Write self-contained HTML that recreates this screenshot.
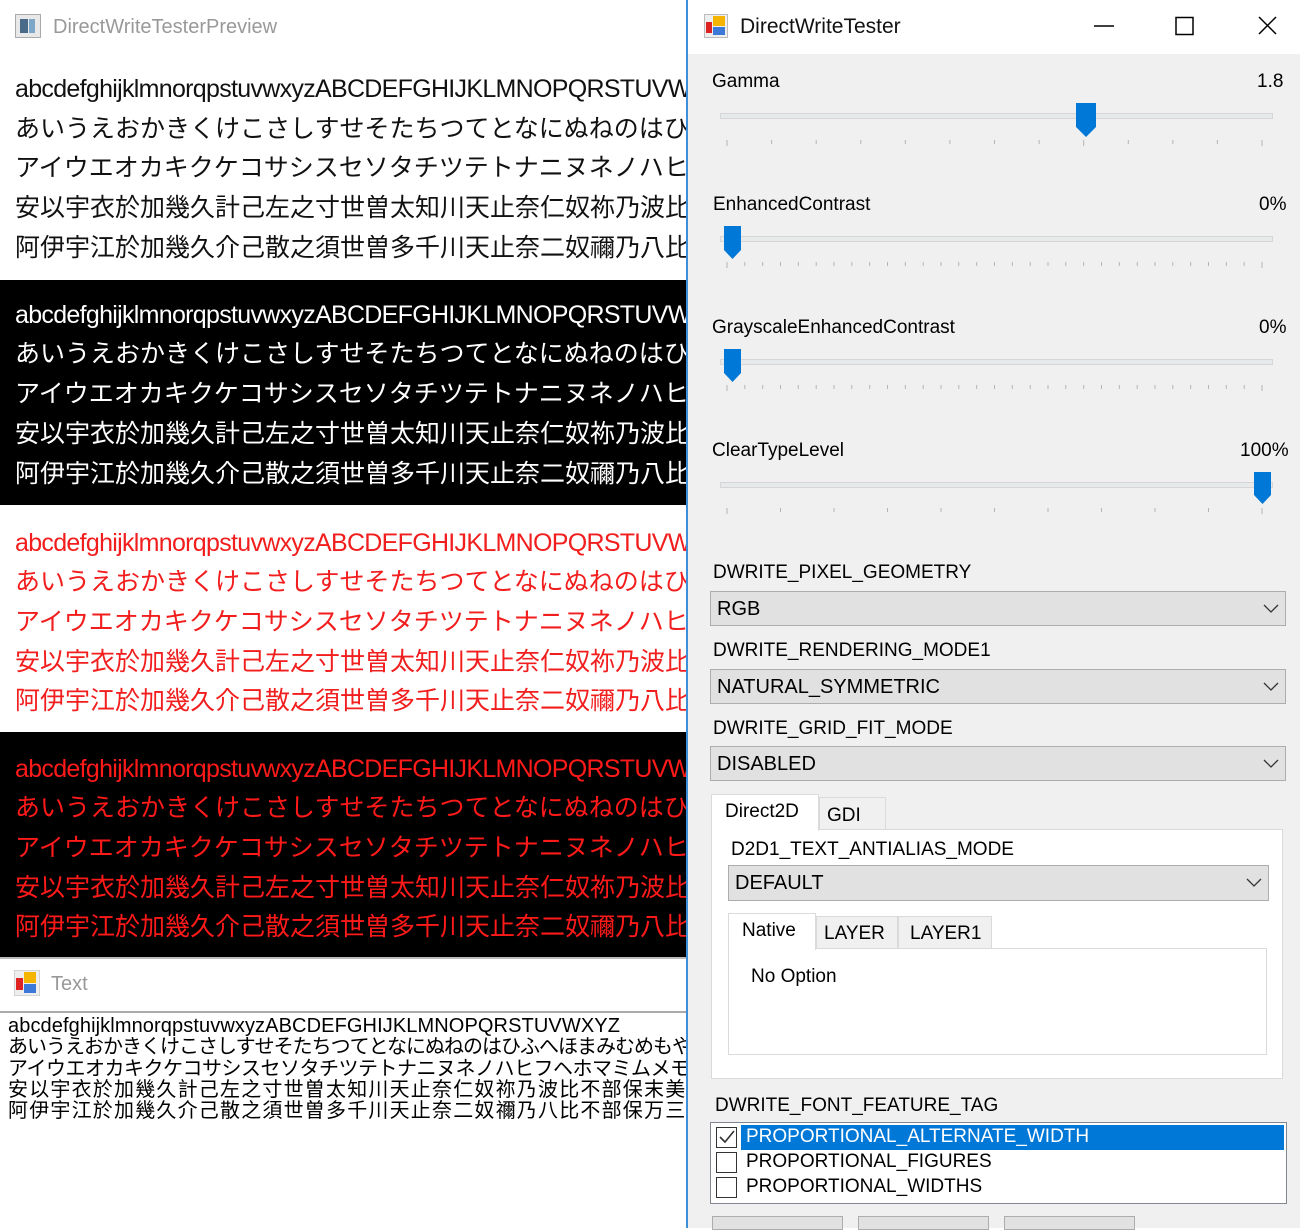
<!DOCTYPE html>
<html><head><meta charset="utf-8">
<style>
*{margin:0;padding:0;box-sizing:border-box}
body{width:1300px;height:1228px;overflow:hidden;background:#fff;position:relative;font-family:"Liberation Sans","Noto Sans CJK JP",sans-serif}
.a{position:absolute;white-space:nowrap}
.pv{position:absolute;left:0;width:686px;overflow:hidden}
.pv div{position:absolute;left:15px;font-size:25px;line-height:30px;white-space:nowrap;font-family:"Liberation Sans","Noto Sans CJK JP",sans-serif;letter-spacing:0px}
.pv div.l{letter-spacing:-0.7px}
.lb{font-size:19px;color:#000}
.combo{position:absolute;background:#e1e1e1;border:1px solid #adadad;font-size:20px;padding-left:6px;line-height:34px}
.combo svg{position:absolute;right:6px;top:12px}
.tk{stroke:#b4b4b4;stroke-width:1}
</style></head><body>

<!-- Left preview window -->
<div class="a" style="left:15px;top:14px;width:26px;height:24px;background:#e8e8e8;border:1px solid #aaa"><div style="position:absolute;left:4px;top:4px;width:8px;height:14px;background:#4a6a8a"></div><div style="position:absolute;left:13px;top:4px;width:6px;height:14px;background:#7da7c9"></div></div>
<div class="a" style="left:53px;top:16px;font-size:20px;color:#999">DirectWriteTesterPreview</div>

<div class="pv" style="top:55px;height:225px;background:#fff;color:#111">
<div class="l" style="top:19px">abcdefghijklmnorqpstuvwxyzABCDEFGHIJKLMNOPQRSTUVWXYZ</div>
<div style="top:59px">あいうえおかきくけこさしすせそたちつてとなにぬねのはひふへほまみむめも</div>
<div style="top:98px">アイウエオカキクケコサシスセソタチツテトナニヌネノハヒフヘホマミムメモ</div>
<div style="top:138px">安以宇衣於加幾久計己左之寸世曽太知川天止奈仁奴祢乃波比不部保末美</div>
<div style="top:178px">阿伊宇江於加幾久介己散之須世曽多千川天止奈二奴禰乃八比不部保万三</div>
</div>
<div class="pv" style="top:280px;height:225px;background:#000;color:#fff">
<div class="l" style="top:20px">abcdefghijklmnorqpstuvwxyzABCDEFGHIJKLMNOPQRSTUVWXYZ</div>
<div style="top:59px">あいうえおかきくけこさしすせそたちつてとなにぬねのはひふへほまみむめも</div>
<div style="top:99px">アイウエオカキクケコサシスセソタチツテトナニヌネノハヒフヘホマミムメモ</div>
<div style="top:139px">安以宇衣於加幾久計己左之寸世曽太知川天止奈仁奴祢乃波比不部保末美</div>
<div style="top:179px">阿伊宇江於加幾久介己散之須世曽多千川天止奈二奴禰乃八比不部保万三</div>
</div>
<div class="pv" style="top:505px;height:227px;background:#fff;color:#f21d1d">
<div class="l" style="top:23px">abcdefghijklmnorqpstuvwxyzABCDEFGHIJKLMNOPQRSTUVWXYZ</div>
<div style="top:62px">あいうえおかきくけこさしすせそたちつてとなにぬねのはひふへほまみむめも</div>
<div style="top:102px">アイウエオカキクケコサシスセソタチツテトナニヌネノハヒフヘホマミムメモ</div>
<div style="top:142px">安以宇衣於加幾久計己左之寸世曽太知川天止奈仁奴祢乃波比不部保末美</div>
<div style="top:181px">阿伊宇江於加幾久介己散之須世曽多千川天止奈二奴禰乃八比不部保万三</div>
</div>
<div class="pv" style="top:732px;height:225px;background:#000;color:#ff1a1a">
<div class="l" style="top:22px">abcdefghijklmnorqpstuvwxyzABCDEFGHIJKLMNOPQRSTUVWXYZ</div>
<div style="top:61px">あいうえおかきくけこさしすせそたちつてとなにぬねのはひふへほまみむめも</div>
<div style="top:101px">アイウエオカキクケコサシスセソタチツテトナニヌネノハヒフヘホマミムメモ</div>
<div style="top:141px">安以宇衣於加幾久計己左之寸世曽太知川天止奈仁奴祢乃波比不部保末美</div>
<div style="top:180px">阿伊宇江於加幾久介己散之須世曽多千川天止奈二奴禰乃八比不部保万三</div>
</div>
<div class="a" style="left:0;top:957px;width:686px;height:2px;background:#bbb"></div>

<!-- Text window -->
<svg class="a" style="left:14px;top:970px" width="26" height="26"><rect x="0" y="0" width="26" height="26" fill="#eee" stroke="#bbb"/><rect x="2" y="8" width="7" height="12" fill="#d22"/><rect x="10" y="2" width="12" height="11" fill="#f4b400"/><rect x="10" y="14" width="12" height="9" fill="#3b78d8"/></svg>
<div class="a" style="left:51px;top:973px;font-size:20px;color:#999">Text</div>
<div class="a" style="left:0;top:1011px;width:686px;height:2px;background:#aaa"></div>
<div class="a" style="left:8px;top:1016px;width:678px;overflow:hidden;font-size:20px;line-height:21.3px;color:#000;font-family:'Liberation Sans','WenQuanYi Zen Hei',sans-serif;letter-spacing:0.3px">
<div style="letter-spacing:0.1px">abcdefghijklmnorqpstuvwxyzABCDEFGHIJKLMNOPQRSTUVWXYZ</div>
<div style="letter-spacing:-1px">あいうえおかきくけこさしすせそたちつてとなにぬねのはひふへほまみむめもやゆよらりる</div>
<div style="letter-spacing:-0.5px">アイウエオカキクケコサシスセソタチツテトナニヌネノハヒフヘホマミムメモヤユヨラリルレ</div>
<div style="letter-spacing:1.2px">安以宇衣於加幾久計己左之寸世曽太知川天止奈仁奴祢乃波比不部保末美</div>
<div style="letter-spacing:1.2px">阿伊宇江於加幾久介己散之須世曽多千川天止奈二奴禰乃八比不部保万三</div>
</div>

<!-- Right window -->
<div class="a" style="left:686px;top:0;width:614px;height:1228px;background:#f0f0f0;border-left:2px solid #3d8fd9"></div>
<div class="a" style="left:688px;top:0;width:612px;height:54px;background:#fff"></div>
<svg class="a" style="left:704px;top:14px" width="24" height="24"><rect x="0.5" y="0.5" width="23" height="23" fill="#eee" stroke="#bbb"/><rect x="2" y="8" width="6" height="11" fill="#d22"/><rect x="9" y="2" width="12" height="10" fill="#f4b400"/><rect x="9" y="13" width="12" height="8" fill="#3b78d8"/></svg>
<div class="a" style="left:740px;top:15px;font-size:21px;color:#111">DirectWriteTester</div>
<svg class="a" style="left:1090px;top:14px" width="190" height="24"><line x1="4" y1="12" x2="24" y2="12" stroke="#000" stroke-width="1.5"/><rect x="86" y="3.5" width="17" height="17" fill="none" stroke="#000" stroke-width="1.5"/><path d="M169 3 L186 20 M186 3 L169 20" stroke="#000" stroke-width="1.5"/></svg>

<!-- Sliders -->
<div class="a lb" style="left:712px;top:71px">Gamma</div>
<div class="a lb" style="left:1257px;top:71px">1.8</div>
<div class="a lb" style="left:713px;top:194px">EnhancedContrast</div>
<div class="a lb" style="left:1259px;top:194px">0%</div>
<div class="a lb" style="left:712px;top:317px">GrayscaleEnhancedContrast</div>
<div class="a lb" style="left:1259px;top:317px">0%</div>
<div class="a lb" style="left:712px;top:440px">ClearTypeLevel</div>
<div class="a lb" style="left:1240px;top:440px">100%</div>

<svg class="a" style="left:688px;top:0" width="612" height="530">
<g fill="#e7eaea" stroke="#d6d6d6">
<rect x="32.5" y="113.5" width="552" height="5"/>
<rect x="32.5" y="236.5" width="552" height="5"/>
<rect x="32.5" y="359.5" width="552" height="5"/>
<rect x="32.5" y="482.5" width="552" height="5"/>
</g>
<g class="tk">
<path d="M39 140v6M83.6 140v4M128.2 140v4M172.8 140v4M217.3 140v4M261.9 140v4M306.5 140v4M351.1 140v4M395.7 140v6M440.3 140v4M484.9 140v4M529.4 140v4M574 140v6"/>
<path d="M39 262v6M56.8 262v4M74.7 262v4M92.5 262v4M110.3 262v4M128.2 262v4M146 262v4M163.8 262v4M181.7 262v4M199.5 262v4M217.3 262v4M235.2 262v4M253 262v4M270.8 262v4M288.7 262v4M306.5 262v4M324.3 262v4M342.2 262v4M360 262v4M377.8 262v4M395.7 262v4M413.5 262v4M431.3 262v4M449.2 262v4M467 262v4M484.8 262v4M502.7 262v4M520.5 262v4M538.3 262v4M556.2 262v4M574 262v6"/>
<path d="M39 385v6M56.8 385v4M74.7 385v4M92.5 385v4M110.3 385v4M128.2 385v4M146 385v4M163.8 385v4M181.7 385v4M199.5 385v4M217.3 385v4M235.2 385v4M253 385v4M270.8 385v4M288.7 385v4M306.5 385v4M324.3 385v4M342.2 385v4M360 385v4M377.8 385v4M395.7 385v4M413.5 385v4M431.3 385v4M449.2 385v4M467 385v4M484.8 385v4M502.7 385v4M520.5 385v4M538.3 385v4M556.2 385v4M574 385v6"/>
<path d="M39 508v6M92.5 508v4M146 508v4M199.5 508v4M253 508v4M306.5 508v4M360 508v4M413.5 508v4M467 508v4M520.5 508v4M574 508v6"/>
</g>
<g fill="#0078d7">
<path d="M388 103h20v24l-10 10l-10-10z"/>
<path d="M36 226h17v24l-8.5 9l-8.5-9z"/>
<path d="M36 349h17v24l-8.5 9l-8.5-9z"/>
<path d="M566 472h17v23l-8.5 9l-8.5-9z"/>
</g>
</svg>

<!-- Combos -->
<div class="a lb" style="left:713px;top:562px">DWRITE_PIXEL_GEOMETRY</div>
<div class="combo" style="left:710px;top:591px;width:576px;height:35px">RGB<svg width="16" height="10"><path d="M1 1l7 7l7-7" fill="none" stroke="#333" stroke-width="1.3"/></svg></div>
<div class="a lb" style="left:713px;top:640px">DWRITE_RENDERING_MODE1</div>
<div class="combo" style="left:710px;top:669px;width:576px;height:35px">NATURAL_SYMMETRIC<svg width="16" height="10"><path d="M1 1l7 7l7-7" fill="none" stroke="#333" stroke-width="1.3"/></svg></div>
<div class="a lb" style="left:713px;top:718px">DWRITE_GRID_FIT_MODE</div>
<div class="combo" style="left:710px;top:746px;width:576px;height:35px">DISABLED<svg width="16" height="10"><path d="M1 1l7 7l7-7" fill="none" stroke="#333" stroke-width="1.3"/></svg></div>

<!-- Outer tabs -->
<div class="a" style="left:711px;top:829px;width:572px;height:250px;background:#fff;border:1px solid #dadada"></div>
<div class="a" style="left:711px;top:794px;width:108px;height:37px;background:#fff;border:1px solid #dadada;border-bottom:none;font-size:19px;padding:6px 0 0 13px">Direct2D</div>
<div class="a" style="left:819px;top:797px;width:67px;height:32px;background:#f0f0f0;border:1px solid #dadada;border-bottom:none;font-size:19px;padding:7px 0 0 7px">GDI</div>
<div class="a lb" style="left:731px;top:839px">D2D1_TEXT_ANTIALIAS_MODE</div>
<div class="combo" style="left:728px;top:865px;width:541px;height:36px;font-size:20px">DEFAULT<svg width="16" height="10"><path d="M1 1l7 7l7-7" fill="none" stroke="#333" stroke-width="1.3"/></svg></div>
<!-- inner tabs -->
<div class="a" style="left:728px;top:948px;width:539px;height:107px;background:#fff;border:1px solid #dadada"></div>
<div class="a" style="left:728px;top:913px;width:88px;height:37px;background:#fff;border:1px solid #dadada;border-bottom:none;font-size:19px;padding:6px 0 0 13px">Native</div>
<div class="a" style="left:816px;top:916px;width:82px;height:32px;background:#f0f0f0;border:1px solid #dadada;border-bottom:none;font-size:19px;padding:6px 0 0 7px">LAYER</div>
<div class="a" style="left:898px;top:916px;width:94px;height:32px;background:#f0f0f0;border:1px solid #dadada;border-bottom:none;font-size:19px;padding:6px 0 0 11px">LAYER1</div>
<div class="a lb" style="left:751px;top:966px">No Option</div>

<!-- Feature list -->
<div class="a lb" style="left:715px;top:1095px">DWRITE_FONT_FEATURE_TAG</div>
<div class="a" style="left:710px;top:1122px;width:577px;height:82px;background:#fff;border:1px solid #828790"></div>
<div class="a" style="left:741px;top:1125px;width:543px;height:25px;background:#0078d7"></div>
<div class="a" style="left:746px;top:1126px;font-size:19px;color:#fff">PROPORTIONAL_ALTERNATE_WIDTH</div>
<div class="a" style="left:746px;top:1151px;font-size:19px">PROPORTIONAL_FIGURES</div>
<div class="a" style="left:746px;top:1176px;font-size:19px">PROPORTIONAL_WIDTHS</div>
<svg class="a" style="left:715px;top:1126px" width="24" height="75"><rect x="1.5" y="1.5" width="20" height="20" fill="#fff" stroke="#333"/><path d="M5 11l5 5l9-11" fill="none" stroke="#333" stroke-width="1.6"/><rect x="1.5" y="26.5" width="20" height="20" fill="#fff" stroke="#333"/><rect x="1.5" y="51.5" width="20" height="20" fill="#fff" stroke="#333"/></svg>

<!-- Buttons -->
<div class="a" style="left:712px;top:1216px;width:131px;height:14px;background:#e1e1e1;border:1px solid #adadad"></div>
<div class="a" style="left:858px;top:1216px;width:131px;height:14px;background:#e1e1e1;border:1px solid #adadad"></div>
<div class="a" style="left:1004px;top:1216px;width:131px;height:14px;background:#e1e1e1;border:1px solid #adadad"></div>
</body></html>
